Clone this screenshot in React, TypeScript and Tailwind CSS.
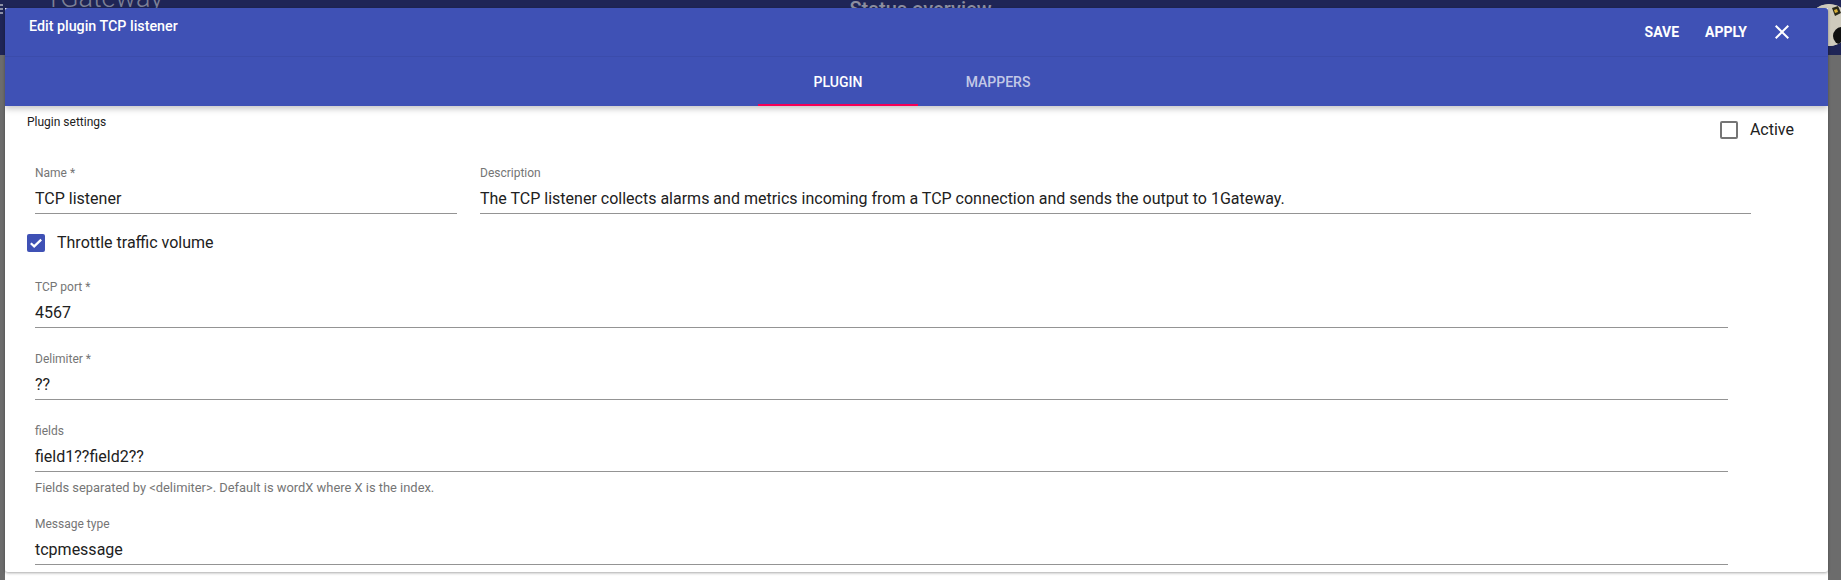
import React from "react";

function Field({
  label,
  value,
  width,
  hint,
  className = "",
}: {
  label: string;
  value: string;
  width: string;
  hint?: string;
  className?: string;
}) {
  return (
    <div className={`flex flex-col ${width} ${className}`}>
      <div className="text-[12px] leading-[14px] text-[#757575] whitespace-nowrap">{label}</div>
      <div className="mt-[9px] pb-[4px] border-b border-[#949494] text-[16px] leading-[20px] text-[#212121] whitespace-nowrap">
        {value}
      </div>
      {hint ? (
        <div className="mt-[8px] text-[12.9px] leading-[15px] text-[#757575] whitespace-nowrap">{hint}</div>
      ) : null}
    </div>
  );
}

function Checkbox({ checked }: { checked: boolean }) {
  if (checked) {
    return (
      <div className="w-[18px] h-[18px] rounded-[2px] bg-[#3f51b5] flex items-center justify-center shrink-0">
        <svg width="18" height="18" viewBox="0 0 18 18">
          <path d="M3.8 9.2 L7.2 12.4 L14.2 5.6" fill="none" stroke="#ffffff" strokeWidth="2.2" />
        </svg>
      </div>
    );
  }
  return <div className="w-[18px] h-[18px] rounded-[2px] border-2 border-[#757575] shrink-0" />;
}

export default function App() {
  return (
    <div className="relative w-[1841px] h-[580px] overflow-hidden bg-[#6c6c6c] font-['Roboto','Liberation_Sans',sans-serif]">
      {/* background app bar */}
      <div className="h-[55px] bg-[#1f2556] grid grid-cols-[1fr_auto_1fr] items-start">
        <div className="flex items-start">
          <div className="ml-[-7px] mt-[4px] w-[10px] flex flex-col gap-[2px]">
            <div className="h-[2px] bg-[#8c90a6]" />
            <div className="h-[2px] bg-[#8c90a6]" />
            <div className="h-[2px] bg-[#8c90a6]" />
          </div>
          <div className="ml-[42px] mt-[-18px] text-[27px] leading-[32px] font-light text-[#7d8196]">1Gateway</div>
        </div>
        <div className="mt-[-3px] text-[20px] leading-[24px] font-medium text-[#8d8fa0]">Status overview</div>
        <div className="flex justify-end">
          <div className="mt-[4px] mr-[-9px] w-[42px] h-[42px] rounded-full bg-[#c9c6b8] overflow-hidden">
            <svg width="42" height="42" viewBox="0 0 42 42">
              <circle cx="21" cy="21" r="21" fill="#cfcbbd" />
              <path d="M24 4 L30 2 L33 9 L27 12 Z" fill="#2a2a1a" />
              <path d="M26 6 L29 5 L30 8 L27 9 Z" fill="#d9b23a" />
              <circle cx="34" cy="32" r="9" fill="#111111" />
            </svg>
          </div>
        </div>
      </div>

      {/* dialog */}
      <div className="absolute left-[5px] top-[8px] w-[1823px] h-[572px] bg-white">
        <div className="h-[564px] rounded-[3px] bg-white shadow-[0_1px_3px_rgba(0,0,0,0.35)] flex flex-col overflow-hidden">
          {/* header */}
          <div className="relative z-10 bg-[#3f51b5] shadow-[0_3px_6px_rgba(0,0,0,0.22)]">
            <div className="h-[49px] flex items-start pl-[24px] pr-[34px] border-b border-[rgba(0,0,0,0.05)]">
              <div className="mt-[8px] text-[14.3px] leading-[20px] font-medium text-white">Edit plugin TCP listener</div>
              <div className="ml-auto mt-[12px] flex items-center">
                <span className="text-[14px] leading-[20px] font-bold text-white">SAVE</span>
                <span className="ml-[26px] text-[14px] leading-[20px] font-bold text-white">APPLY</span>
                <svg className="ml-[23px]" width="24" height="24" viewBox="0 0 24 24">
                  <path
                    d="M19 6.41L17.59 5 12 10.59 6.41 5 5 6.41 10.59 12 5 17.59 6.41 19 12 13.41 17.59 19 19 17.59 13.41 12z"
                    fill="#ffffff"
                  />
                </svg>
              </div>
            </div>
            <div className="h-[49px] flex justify-center pl-[3px]">
              <div className="relative w-[160px] flex items-center justify-center">
                <span className="text-[14px] leading-[20px] font-medium text-white">PLUGIN</span>
                <div className="absolute left-0 right-0 bottom-0 h-[2px] bg-[#f50057]" />
              </div>
              <div className="w-[160px] flex items-center justify-center">
                <span className="text-[14px] leading-[20px] font-medium text-white/70">MAPPERS</span>
              </div>
            </div>
          </div>

          {/* content */}
          <div className="flex flex-col pl-[22px] pr-[34px]">
            <div className="flex items-start pt-[9px]">
              <div className="text-[12px] leading-[14px] text-[#212121]">Plugin settings</div>
              <div className="ml-auto mt-[6px] flex items-center">
                <Checkbox checked={false} />
                <span className="ml-[12px] text-[16px] leading-[18px] text-[#212121]">Active</span>
              </div>
            </div>

            <div className="mt-[27px] ml-[8px] flex">
              <Field label="Name *" value="TCP listener" width="w-[422px]" />
              <Field
                label="Description"
                value="The TCP listener collects alarms and metrics incoming from a TCP connection and sends the output to 1Gateway."
                width="w-[1271px]"
                className="ml-[23px]"
              />
            </div>

            <div className="mt-[20px] flex items-center">
              <Checkbox checked={true} />
              <span className="ml-[12px] text-[16px] leading-[18px] text-[#212121]">Throttle traffic volume</span>
            </div>

            <div className="ml-[8px] flex flex-col">
              <Field label="TCP port *" value="4567" width="w-[1693px]" className="mt-[28px]" />
              <Field label="Delimiter *" value="??" width="w-[1693px]" className="mt-[24px]" />
              <Field
                label="fields"
                value="field1??field2??"
                width="w-[1693px]"
                className="mt-[24px]"
                hint="Fields separated by <delimiter>. Default is wordX where X is the index."
              />
              <Field label="Message type" value="tcpmessage" width="w-[1693px]" className="mt-[22px]" />
            </div>
          </div>
        </div>
      </div>
    </div>
  );
}
